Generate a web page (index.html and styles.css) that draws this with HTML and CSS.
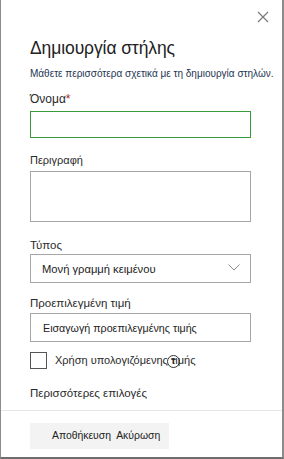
FILE: index.html
```html
<!DOCTYPE html>
<html lang="el">
<head>
<meta charset="utf-8">
<link rel="stylesheet" href="styles.css">
</head>
<body>
<div class="panel">
  <div class="header">
    <svg class="close" width="12" height="12" viewBox="0 0 12 12"><path d="M1 1L11 11M11 1L1 11" stroke="#7a7a7a" stroke-width="1.2" fill="none"/></svg>
  </div>
  <div class="body">
    <h1 class="title">Δημιουργία στήλης</h1>
    <div class="link">Μάθετε περισσότερα σχετικά με τη δημιουργία στηλών.</div>
    <div class="label l-name">Όνομα<span class="req">*</span></div>
    <div class="input input-active"></div>
    <div class="label l-desc">Περιγραφή</div>
    <div class="textarea"></div>
    <div class="label l-type">Τύπος</div>
    <div class="select">
      <span>Μονή γραμμή κειμένου</span>
      <svg class="chev" width="12" height="7" viewBox="0 0 12 7"><path d="M0.5 0.5L6 6L11.5 0.5" stroke="#8a8a8a" stroke-width="1" fill="none"/></svg>
    </div>
    <div class="label l-def">Προεπιλεγμένη τιμή</div>
    <div class="input input-def"><span>Εισαγωγή προεπιλεγμένης τιμής</span></div>
    <div class="check-row">
      <span class="checkbox"></span>
      <span class="check-label">Χρήση υπολογιζόμενης <span class="tchar">τ<span class="info">T</span></span>ιμής</span>
    </div>
    <div class="label l-more">Περισσότερες επιλογές</div>
  </div>
  <div class="footer">
    <div class="btns">Αποθήκευση&nbsp; Ακύρωση</div>
  </div>
</div>
</body>
</html>
```
FILE: styles.css
```css
html, body { margin: 0; padding: 0; background: #fff; }
body { font-family: "Liberation Sans", Arial, sans-serif; color: #222; }
.panel {
  width: 284px; height: 459px; box-sizing: border-box;
  border-left: 1px solid #8c8c8c; border-right: 2px solid #8c8c8c; border-bottom: 2px solid #6e6e6e;
  display: flex; flex-direction: column;
}
.header { height: 34px; display: flex; justify-content: flex-end; align-items: flex-start; }
.close { margin-top: 11px; margin-right: 13px; }
.body { padding-left: 29px; }
.title { margin: 0; font-weight: normal; font-size: 17.5px; line-height: 28px; color: #222; letter-spacing: -0.1px; }
.link { margin-top: 4px; font-size: 10px; line-height: 16px; color: #1d3552; white-space: nowrap; }
.label { font-size: 11.5px; line-height: 16px; color: #2a2a2a; }
.req { color: #a4262c; }
.l-name { margin-top: 9px; font-size: 12px; }
.input { box-sizing: border-box; width: 221px; height: 27px; border: 1px solid #a6a6a6; margin-top: 4px; }
.input-active { border-color: #3a9a3a; }
.l-desc { margin-top: 14px; font-size: 11px; }
.textarea { box-sizing: border-box; width: 221px; height: 51px; border: 1px solid #a6a6a6; margin-top: 3px; }
.l-type { margin-top: 15px; }
.select {
  box-sizing: border-box; width: 221px; height: 29px; border: 1px solid #a6a6a6; margin-top: 1px;
  display: flex; align-items: center; justify-content: space-between; padding: 0 10px 0 11px;
  font-size: 11.2px; color: #222;
}
.chev { margin-top: -2px; }
.l-def { margin-top: 12px; }
.input-def { height: 29px; margin-top: 2px; display: flex; align-items: center; padding-left: 12px; font-size: 10.7px; color: #222; }
.check-row { margin-top: 9px; display: flex; align-items: center; height: 18px; }
.checkbox { box-sizing: border-box; width: 17px; height: 17px; border: 1px solid #555; }
.check-label { margin-left: 8px; font-size: 11px; line-height: 16px; color: #2a2a2a; }
.tchar { position: relative; }
.info {
  position: absolute; left: -4px; top: 1px; width: 11px; height: 11px; border: 1px solid #333; border-radius: 50%;
  font-size: 8px; line-height: 11px; text-align: center; font-weight: bold; color: #222;
}
.l-more { margin-top: 16px; }
.footer { margin-top: 9px; border-top: 1px solid #e6e6e6; padding: 12px 0 0 29px; }
.btns {
  width: 139px; height: 26px; box-sizing: border-box; background: #f3f3f3;
  padding-left: 22px; font-size: 10.4px; line-height: 26px; color: #222; white-space: nowrap;
}
```
